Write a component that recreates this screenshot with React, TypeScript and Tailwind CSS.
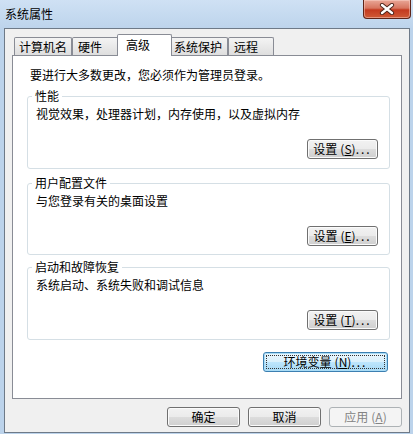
import React from "react";

const FONT = "font-['Noto_Sans_CJK_SC','Microsoft_YaHei',sans-serif]";

function Btn({
  children,
  className = "",
}: {
  children: React.ReactNode;
  className?: string;
}) {
  return (
    <div
      className={`h-[20px] rounded-[3px] border border-[#707070] bg-[linear-gradient(#f2f2f2_0%,#ebebeb_50%,#dddddd_50%,#cfcfcf_100%)] shadow-[inset_0_0_0_1px_#fbfbfb] flex items-center justify-center leading-[14px] text-[12px] ${className}`}
    >
      {children}
    </div>
  );
}

function Label({ text, letter, dots = true }: { text: string; letter: string; dots?: boolean }) {
  return (
    <span className="whitespace-nowrap">
      {text}
      <span className="ml-[3px]">(</span>
      <span className="underline">{letter}</span>)
      {dots && <span className="tracking-[2px]">...</span>}
    </span>
  );
}

function Group({
  title,
  desc,
  letter,
  className = "",
}: {
  title: string;
  desc: string;
  letter: string;
  className?: string;
}) {
  return (
    <fieldset
      className={`ml-[14px] mr-[11px] border border-[#d5dfe5] rounded-[3px] pl-[4px] pr-[11px] ${className}`}
    >
      <legend className="px-[3px] leading-[14px] text-[12px]">{title}</legend>
      <div className="pl-[4px] mt-[4px] leading-[14px]">{desc}</div>
      <div className="mt-[18px] flex justify-end">
        <Btn className="w-[71px]">
          <Label text="设置" letter={letter} />
        </Btn>
      </div>
    </fieldset>
  );
}

function Tab({
  label,
  className = "",
}: {
  label: string;
  className?: string;
}) {
  return (
    <div
      className={`h-[18px] border-t border-l border-r border-[#898c95] rounded-t-[2px] bg-linear-to-b from-[#f4f4f4] to-[#dedede] pt-[2px] leading-[14px] whitespace-nowrap ${className}`}
    >
      {label}
    </div>
  );
}

export default function App() {
  return (
    <div
      className={`w-[413px] h-[434px] bg-[#bcd3eb] flex flex-col overflow-hidden text-[12px] text-black ${FONT}`}
    >
      {/* Title bar */}
      <div className="h-[28px] shrink-0 flex items-start justify-between bg-linear-to-b from-[#cfe1f4] to-[#bdd4ec]">
        <div className="pl-[5px] pt-[7px] leading-[14px] text-[12px] text-black">
          系统属性
        </div>
        <div className="mr-[2px] w-[48px] h-[19px] rounded-b-[4px] border border-t-0 border-[#5e2418] bg-[linear-gradient(#e9a797_0%,#d7755f_45%,#c43a1f_55%,#cf5a36_100%)] shadow-[inset_0_0_0_1px_rgba(255,220,210,0.45)] flex items-center justify-center">
          <svg width="16" height="12" viewBox="0 0 16 12">
            <path
              d="M3 2 L13 10 M13 2 L3 10"
              stroke="#4a2218"
              strokeWidth="4.2"
              strokeLinecap="round"
            />
            <path
              d="M3 2 L13 10 M13 2 L3 10"
              stroke="#ffffff"
              strokeWidth="2.4"
              strokeLinecap="round"
            />
          </svg>
        </div>
      </div>

      {/* Client area */}
      <div className="flex-1 ml-[4px] mr-[3px] mb-[1px] border border-[#6e7a88] bg-[#f0f0f0] flex flex-col">
        {/* Tabs */}
        <div className="h-[26px] shrink-0 pl-[9px] flex items-end">
          <Tab label="计算机名" className="w-[58px] pl-[4px]" />
          <Tab label="硬件" className="w-[47px] pl-[5px]" />
          <div className="relative z-10 -mx-[2px] -mb-[1px] w-[55px] h-[22px] border-t border-l border-r border-[#898c95] rounded-t-[2px] bg-white pl-[8px] pt-[3px] leading-[14px]">
            高级
          </div>
          <Tab label="系统保护" className="w-[58px] pl-[3px]" />
          <Tab label="远程" className="w-[46px] pl-[5px]" />
        </div>

        {/* Panel */}
        <div className="mx-[7px] h-[344px] shrink-0 border border-[#898c95] bg-white flex flex-col">
          <div className="pt-[12px] pl-[17px] leading-[14px]">
            要进行大多数更改，您必须作为管理员登录。
          </div>
          <Group
            title="性能"
            desc="视觉效果，处理器计划，内存使用，以及虚拟内存"
            letter="S"
            className="mt-[7px] h-[80px]"
          />
          <Group
            title="用户配置文件"
            desc="与您登录有关的桌面设置"
            letter="E"
            className="mt-[7px] h-[79px]"
          />
          <Group
            title="启动和故障恢复"
            desc="系统启动、系统失败和调试信息"
            letter="T"
            className="mt-[5px] h-[80px]"
          />
          <div className="mt-[12px] self-end mr-[13px] w-[125px] h-[20px] rounded-[3px] border border-[#3c7fb1] bg-[linear-gradient(#eaf6fd_0%,#d9f0fc_50%,#bee6fd_50%,#a7d9f5_100%)] shadow-[inset_0_0_0_1px_#a9dcf6] p-[2px] flex">
            <div className="flex-1 border border-dotted border-[#333] flex items-center justify-center leading-[14px]">
              <Label text="环境变量" letter="N" />
            </div>
          </div>
        </div>

        {/* Bottom buttons */}
        <div className="mt-[8px] flex justify-end gap-[8px] pr-[7px]">
          <Btn className="w-[73px]">确定</Btn>
          <Btn className="w-[73px]">取消</Btn>
          <div className="w-[73px] h-[20px] rounded-[3px] border border-[#adb2b5] bg-[#f4f4f4] text-[#838383] flex items-center justify-center leading-[14px]">
            <Label text="应用" letter="A" dots={false} />
          </div>
        </div>
      </div>
    </div>
  );
}
